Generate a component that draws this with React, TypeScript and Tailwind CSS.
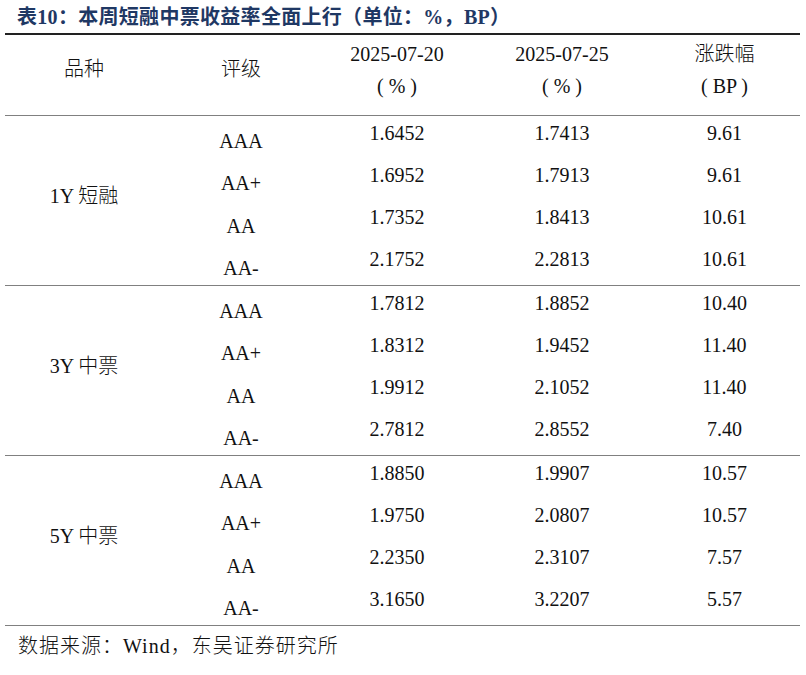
const groups = [
  {
    label: "1Y 短融",
    rows: [
      ["AAA", "1.6452", "1.7413", "9.61"],
      ["AA+", "1.6952", "1.7913", "9.61"],
      ["AA", "1.7352", "1.8413", "10.61"],
      ["AA-", "2.1752", "2.2813", "10.61"],
    ],
  },
  {
    label: "3Y 中票",
    rows: [
      ["AAA", "1.7812", "1.8852", "10.40"],
      ["AA+", "1.8312", "1.9452", "11.40"],
      ["AA", "1.9912", "2.1052", "11.40"],
      ["AA-", "2.7812", "2.8552", "7.40"],
    ],
  },
  {
    label: "5Y 中票",
    rows: [
      ["AAA", "1.8850", "1.9907", "10.57"],
      ["AA+", "1.9750", "2.0807", "10.57"],
      ["AA", "2.2350", "2.3107", "7.57"],
      ["AA-", "3.1650", "3.2207", "5.57"],
    ],
  },
];

const cols = "grid grid-cols-[158px_156px_156px_174px_151px]";

function Group(props: { label: string; rows: string[][] }) {
  return (
    <div className={`${cols} grid-rows-[repeat(4,42.25px)] border-b border-[#808080]`}>
      <div className="row-span-4 flex items-center justify-center pb-[9px]">{props.label}</div>
      {props.rows.map((r, i) => (
        <div key={i} className="contents">
          <div
            className="flex items-center justify-center pt-[8px]"
            style={{ gridColumn: 2, gridRow: i + 1 }}
          >
            {r[0]}
          </div>
          <div className="flex items-center justify-center pb-[9px]" style={{ gridColumn: 3, gridRow: i + 1 }}>
            {r[1]}
          </div>
          <div className="flex items-center justify-center pb-[9px]" style={{ gridColumn: 4, gridRow: i + 1 }}>
            {r[2]}
          </div>
          <div className="flex items-center justify-center pb-[9px]" style={{ gridColumn: 5, gridRow: i + 1 }}>
            {r[3]}
          </div>
        </div>
      ))}
    </div>
  );
}

export default function App() {
  return (
    <div className="w-[806px] h-[675px] bg-white text-[#111] font-['Liberation_Serif','Noto_Sans_CJK_SC',serif]">
      <div className="h-[33px] pl-[17px] flex items-center text-[20px] font-bold tracking-[0.3px] text-[#1f3864]">
        表10：本周短融中票收益率全面上行（单位：%，BP）
      </div>
      <div className="ml-[5px] w-[795px] border-t-2 border-[#222] text-[20px] font-light">
        <div className={`${cols} h-[81px] border-b border-[#808080]`}>
          <div className="flex items-center justify-center pb-[12px]">品种</div>
          <div className="flex items-center justify-center pb-[12px]">评级</div>
          <div className="flex flex-col items-center justify-center leading-[32px] pb-[11px]">
            <span>2025-07-20</span>
            <span>( % )</span>
          </div>
          <div className="flex flex-col items-center justify-center leading-[32px] pb-[11px]">
            <span>2025-07-25</span>
            <span>( % )</span>
          </div>
          <div className="flex flex-col items-center justify-center leading-[32px] pb-[11px]">
            <span>涨跌幅</span>
            <span>( BP )</span>
          </div>
        </div>
        {groups.map((g) => (
          <Group key={g.label} label={g.label} rows={g.rows} />
        ))}
      </div>
      <div className="mt-[6px] pl-[18px] leading-[28px] text-[20px] font-light tracking-[1px] text-[#111]">
        数据来源：Wind，东吴证券研究所
      </div>
    </div>
  );
}
